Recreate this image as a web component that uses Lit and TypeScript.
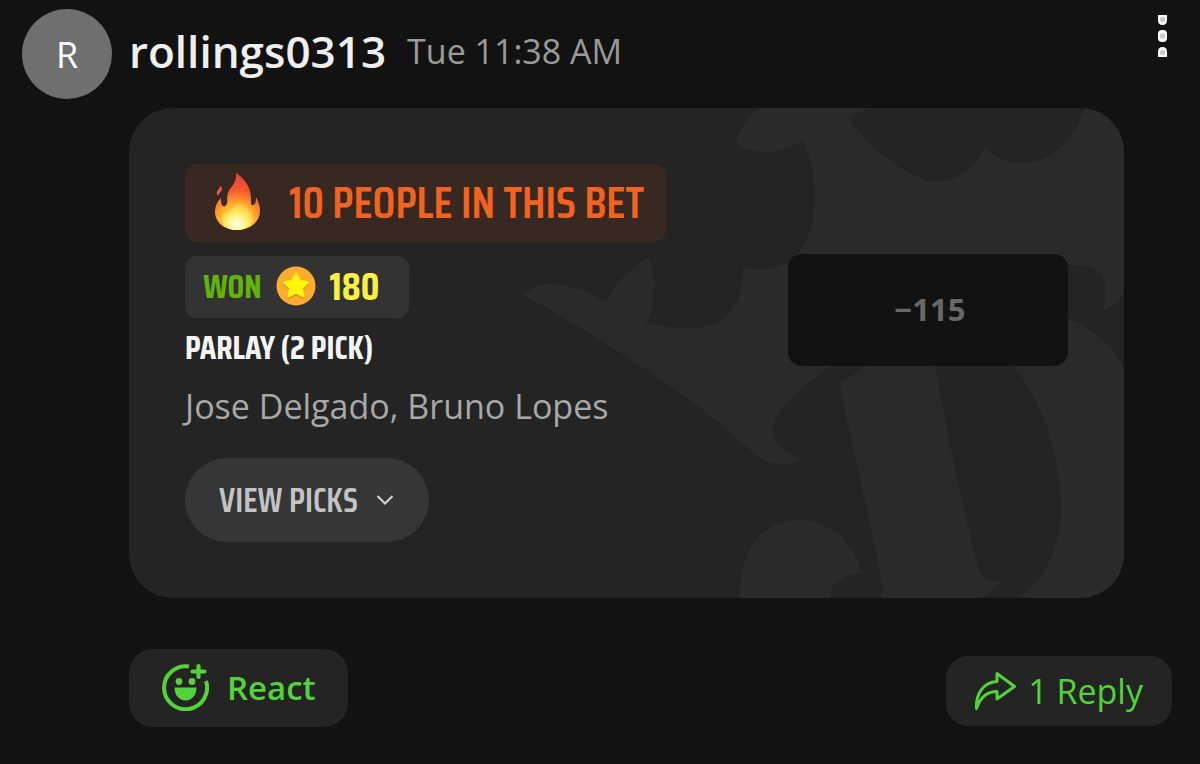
import { LitElement, html, css } from "lit";
import { customElement, property } from "lit/decorators.js";

@customElement("bet-card")
class BetCard extends LitElement {
  @property({ type: Number }) people = 10;
  @property({ type: Number }) payout = 180;
  @property() odds = "−115";
  @property() picks = "Jose Delgado, Bruno Lopes";

  static styles = css`
    :host { display: block; }
    .card {
      position: relative;
      overflow: hidden;
      border-radius: 44px;
      background: #242424;
      padding: 56px;
    }
    .watermark {
      position: absolute;
      top: 0;
      right: 0;
      height: 100%;
      fill: #2b2b2b;
    }
    .content { position: relative; }
    .narrow {
      font-family: "Saira Condensed", "Liberation Sans Narrow", "Roboto Condensed", "Liberation Sans", sans-serif;
      font-weight: 600;
    }
    .people {
      display: inline-flex;
      align-items: center;
      gap: 28px;
      height: 78px;
      padding: 0 22px 2px 28px;
      box-sizing: border-box;
      border-radius: 12px;
      background: #382822;
      color: #f4621f;
      font-size: 45px;
      white-space: nowrap;
    }
    .flame { width: 48px; height: 60px; flex: none; }
    .row {
      display: flex;
      justify-content: space-between;
      align-items: flex-start;
      gap: 24px;
      margin-top: 12px;
    }
    .details { padding-top: 2px; }
    .won {
      display: inline-flex;
      align-items: center;
      gap: 14px;
      height: 62px;
      padding: 0 30px 2px 18px;
      box-sizing: border-box;
      border-radius: 12px;
      background: #333333;
      font-weight: 700;
    }
    .won-label { color: #62b30a; font-size: 33px; }
    .amount { color: #fbee45; font-size: 39px; }
    .coin { width: 40px; height: 40px; flex: none; }
    .title {
      margin: 8px 0 0;
      color: #f4f4f4;
      font-size: 33px;
      font-weight: 700;
      line-height: 44px;
    }
    .names {
      margin: 12px 0 0;
      color: #a8a8a8;
      font-size: 34px;
      line-height: 48px;
    }
    .odds {
      width: 280px;
      height: 112px;
      flex: none;
      padding: 0 0 2px 4px;
      border: 0;
      border-radius: 14px;
      background: #121212;
      color: #686868;
      font: 700 31px "Open Sans", sans-serif;
    }
    .view {
      display: inline-flex;
      align-items: center;
      gap: 18px;
      height: 84px;
      margin-top: 28px;
      padding: 0 35px 0 34px;
      border: 0;
      border-radius: 42px;
      background: #363636;
      color: #c4c4c4;
      font-size: 34px;
    }
    .chevron { width: 18px; height: 12px; }
  `;

  render() {
    return html`
      <article class="card">
        <svg class="watermark" viewBox="500 108 624 490" aria-hidden="true">
          <path d="M760 108C748 117 738 130 736 143C740 148 752 152 768 152C782 151 794 146 803 140C813 162 817 190 814 210C812 230 807 244 796 256C782 269 762 273 743 266C745 296 733 313 717 322C701 331 672 329 646 323C656 306 657 277 650 257C630 268 615 282 606 302C582 288 564 284 548 284C536 285 529 290 523 295C590 331 650 371 700 407L745 445C759 460 773 467 798 462Q802 460 801 457C780 454 773 440 773 430C774 405 805 387 830 366L920 290L1068 265L1090 266C1106 272 1109 291 1102 311C1110 309 1120 301 1124 290V108H1086C1070 143 1050 163 1023 163C1007 163 992 157 984 147C976 171 953 183 930 182C905 175 864 145 849 117L867 108Z"/>
          <path d="M1040 310L1068 318C1094 329 1112 346 1124 367V598H1020C1052 570 1061 540 1061 505C1059 450 1044 403 1012 365Z"/>
          <path d="M840 384L866 366L935 362C944 420 961 500 977 564C980 576 988 583 1001 581Q992 592 981 598H883C879 550 852 450 840 384Z"/>
          <path d="M740 598C738 548 765 520 800 520C830 520 854 543 862 573C845 574 829 583 830 598Z"/>
        </svg>
        <div class="content">
          <div class="people narrow">
            <svg class="flame" viewBox="0 0 48 60" role="img" aria-label="Fire">
              <defs>
                <radialGradient id="fire" cx="24" cy="50" r="46" gradientUnits="userSpaceOnUse">
                  <stop offset="0" stop-color="#fff7a8"/>
                  <stop offset=".2" stop-color="#ffe23c"/>
                  <stop offset=".46" stop-color="#ff9c2c"/>
                  <stop offset=".7" stop-color="#fa5530"/>
                  <stop offset="1" stop-color="#e8443a"/>
                </radialGradient>
                <radialGradient id="core" cx="24" cy="52" r="24" gradientUnits="userSpaceOnUse">
                  <stop offset="0" stop-color="#fffff0"/>
                  <stop offset=".4" stop-color="#fff37a"/>
                  <stop offset=".8" stop-color="#ffc83a" stop-opacity=".7"/>
                  <stop offset="1" stop-color="#ffa52e" stop-opacity="0"/>
                </radialGradient>
              </defs>
              <path fill="url(#fire)" d="M23 1C31 6 38 15 38 26C38 31 38 34 40 33C43 32 43 29 43 25C46 30 47 35 47 39C47 50 37 58 24 58C11 58 2 50 2 40C2 34 4 30 8 26C8 32 9 35 12 34C16 32 13 27 15 21C17 15 24 12 23 1Z"/>
              <path fill="#e8553f" d="M8 14C11 19 6 20 5 24C2 21 5 17 8 14Z"/>
              <path fill="url(#core)" d="M27 24C27 32 35 34 39 42C43 51 34 58 24 58C13 58 6 51 9 43C12 39 16 42 19 37C22 33 24 31 27 24Z"/>
            </svg>
            <span>${this.people} PEOPLE IN THIS BET</span>
          </div>
          <div class="row">
            <div class="details">
              <div class="won narrow">
                <span class="won-label">WON</span>
                <svg class="coin" viewBox="0 0 40 40" aria-hidden="true">
                  <circle cx="20" cy="20" r="19.5" fill="#feab2e"/>
                  <path fill="#d98a18" stroke="#d98a18" stroke-width="2" stroke-linejoin="round" d="M20 9L23.8 16.5L32 17.8L26 23.8L27.4 32L20 28L12.6 32L14 23.8L8 17.8L16.2 16.5Z"/>
                  <path fill="#fff60a" stroke="#fff60a" stroke-width="2" stroke-linejoin="round" d="M20 7.500L23.800 15L32 16.300L26 22.300L27.400 30.500L20 26.500L12.600 30.500L14 22.300L8 16.300L16.200 15Z"/>
                </svg>
                <span class="amount">${this.payout}</span>
              </div>
              <h2 class="title narrow">PARLAY (2 PICK)</h2>
              <p class="names">${this.picks}</p>
            </div>
            <button class="odds" type="button">${this.odds}</button>
          </div>
          <button class="view narrow" type="button">
            VIEW PICKS
            <svg class="chevron" viewBox="0 0 18 12" fill="none" stroke="#d0d0d0" stroke-width="2.200" aria-hidden="true">
              <path d="M1.500 2L9 9.500L16.500 2"/>
            </svg>
          </button>
        </div>
      </article>
    `;
  }
}

@customElement("app-root")
class AppRoot extends LitElement {
  static styles = css`
    :host {
      display: block;
      min-height: 100vh;
      box-sizing: border-box;
      background: #121212;
      font-family: "Open Sans", sans-serif;
    }
    .post {
      display: grid;
      grid-template-columns: 89px minmax(0, 1fr);
      column-gap: 18px;
      padding: 9px 28px 0 22px;
    }
    .avatar {
      display: grid;
      place-items: center;
      width: 90px;
      height: 90px;
      border-radius: 50%;
      background: #6f6f6f;
      color: #ffffff;
      font-size: 36px;
    }
    .head {
      display: flex;
      justify-content: space-between;
      align-items: flex-start;
    }
    .byline {
      display: flex;
      align-items: center;
      gap: 21px;
      line-height: 84px;
      white-space: nowrap;
    }
    .user { color: #efefef; font-size: 44px; font-weight: 600; }
    .time { color: #9a9a9a; font-size: 34px; }
    .menu {
      width: 20px;
      height: 54px;
      padding: 0;
      border: 0;
      background: none;
    }
    .menu svg { display: block; width: 20px; height: 54px; }
    .body { grid-column: 2; padding-top: 9px; }
    .card { margin-right: 48px; }
    .actions {
      display: flex;
      justify-content: space-between;
      align-items: center;
      margin-top: 51px;
    }
    .action {
      display: inline-flex;
      align-items: center;
      border: 0;
      background: #242424;
      color: #53d337;
      font-family: inherit;
      font-size: 34px;
      white-space: nowrap;
    }
    .react {
      gap: 18px;
      height: 78px;
      padding: 0 32px 2px;
      border-radius: 24px;
      font-size: 33px;
      font-weight: 600;
    }
    .reply {
      gap: 12px;
      height: 70px;
      margin-top: 6px;
      padding: 0 29px 0 28px;
      border-radius: 22px;
    }
    .face { width: 48px; height: 48px; }
    .arrow { width: 42px; height: 40px; }
  `;

  render() {
    return html`
      <main class="post">
        <div class="avatar">R</div>
        <header class="head">
          <div class="byline">
            <span class="user">rollings0313</span>
            <time class="time">Tue 11:38 AM</time>
          </div>
          <button class="menu" type="button" aria-label="More options">
            <svg viewBox="0 0 20 54" aria-hidden="true">
              <g fill="#ffffff">
                <path d="M6 6H15V11Q15 16 10.500 16Q6 16 6 11Z"/>
                <rect x="6" y="21" width="9" height="12" rx="4"/>
                <path d="M6 48H15V43Q15 38 10.500 38Q6 38 6 43Z"/>
              </g>
              <g fill="#cccccc">
                <circle cx="10.500" cy="10.500" r="2.800"/>
                <circle cx="10.500" cy="27" r="2.800"/>
                <circle cx="10.500" cy="43.500" r="2.800"/>
              </g>
            </svg>
          </button>
        </header>
        <section class="body">
          <bet-card class="card"></bet-card>
          <footer class="actions">
            <button class="action react" type="button">
              <svg class="face" viewBox="0 0 48 48" fill="none" stroke="#53d337" stroke-width="4" aria-hidden="true">
                <path d="M28 3.500A21.500 21.500 0 1 0 45 18"/>
                <path stroke-width="4.200" stroke-linecap="round" d="M37.500 3V14M31.500 8.500H43.500"/>
                <g fill="#53d337" stroke="none">
                  <circle cx="18" cy="18.500" r="3.400"/>
                  <circle cx="31" cy="18.500" r="3.400"/>
                  <path d="M13.500 24.500H35.500C35.500 32 31 37.500 24.500 37.500C18 37.500 13.500 32 13.500 24.500Z"/>
                </g>
              </svg>
              React
            </button>
            <button class="action reply" type="button">
              <svg class="arrow" viewBox="0 0 42 40" fill="none" stroke="#53d337" stroke-width="3" stroke-linejoin="round" aria-hidden="true">
                <path d="M23 2.500L40.500 15.500L23 28V20.500C13 20.500 6 27 2.500 37.500C1.500 24 9 11 23 10.500Z"/>
              </svg>
              1 Reply
            </button>
          </footer>
        </section>
      </main>
    `;
  }
}
